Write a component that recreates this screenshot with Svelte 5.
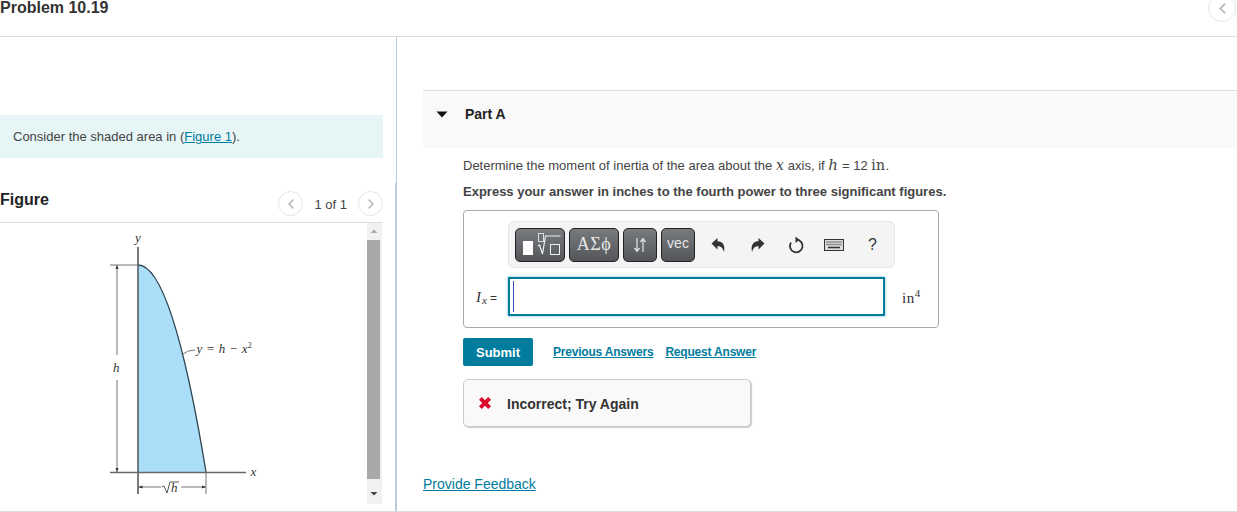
<script>
  const hPath = 'M138 265Q172 265 206 472L138 472Z';
</script>

<div class="page">
  <header class="top">
    <h1>Problem 10.19</h1>
    <button class="round top-back" aria-label="Back">
      <svg viewBox="0 0 10 14" width="9" height="13"><path d="M8 1.500 2.500 7 8 12.500" /></svg>
    </button>
  </header>

  <main class="main">
    <section class="left">
      <div class="intro">Consider the shaded area in (<a href="#f">Figure 1</a>).</div>
      <div class="fig-head">
        <h2>Figure</h2>
        <div class="pager">
          <button class="round" aria-label="Previous"><svg viewBox="0 0 10 14" width="8" height="12"><path d="M8 1.500 2.500 7 8 12.500" /></svg></button>
          <span>1 of 1</span>
          <button class="round" aria-label="Next"><svg viewBox="0 0 10 14" width="8" height="12"><path d="M2 1.500 7.500 7 2 12.500" /></svg></button>
        </div>
      </div>
      <div class="fig-body">
        <svg class="figure" viewBox="0 223 367 281" width="367" height="281">
          <path d={hPath} fill="#abdef9" />
          <path d="M138 265Q172 265 206 472" fill="none" stroke="#2f4650" stroke-width="1.300" />
          <g fill="none" stroke="#777" stroke-width="1">
            <path d="M110 265H138M117 265V355M117 380V472" />
            <path d="M206 472V494M138 487H161M181 487H206" />
            <path d="M183 354Q188 350 195 350" />
          </g>
          <path d="M138 247V494" stroke="#5d666b" stroke-width="1.700" />
          <path d="M110 472.500H246" stroke="#666" stroke-width="1.300" />
          <path d="M117 265l-1.500 4h3zM117 472l-1.500-4h3zM138.500 487l4-1.500v3zM206 487l-4-1.500v3z" fill="#333" />
          <path d="M162 487l2-1 3 7 3-11h9" fill="none" stroke="#444" stroke-width=".9" />
          <g class="lbl">
            <text x="135" y="241.500">y</text>
            <text x="113" y="371.500">h</text>
            <text class="eqn" x="196.500" y="352.500">y = h − x<tspan dy="-5" font-size="8" font-style="normal">2</tspan></text>
            <text x="250.500" y="475.500">x</text>
            <text x="171" y="492">h</text>
          </g>
        </svg>
        <div class="scroll">
          <svg viewBox="0 0 14 17" width="14" height="17"><path d="M3.500 10 7 6.500 10.500 10Z" fill="#aaa" /></svg>
          <div class="thumb"></div>
          <svg viewBox="0 0 14 25" width="14" height="25"><path d="M3.500 13 7 16.500 10.500 13Z" fill="#444" /></svg>
        </div>
      </div>
    </section>

    <section class="right">
      <div class="part">
        <svg class="caret" viewBox="0 0 12 7" width="12" height="7"><path d="M0.500 0.500H11.500L6 6.500Z" fill="#111" /></svg>
        <h3>Part A</h3>
      </div>
      <div class="work">
        <p class="q">Determine the moment of inertia of the area about the <i class="m">x</i> axis, if <i class="m big">h</i> = 12 <span class="m up">in</span>.</p>
        <p class="ex">Express your answer in inches to the fourth power to three significant figures.</p>

        <div class="answer">
          <div class="toolbar">
            <button class="tb w50" aria-label="Templates">
              <svg viewBox="0 0 48 32" width="48" height="32">
                <rect x="7" y="12" width="10" height="14" fill="#fff" />
                <path d="M22 17l1.500-1 3 9 3-18h15" fill="none" stroke="#eee" stroke-width="1.200" />
                <rect x="22.500" y="4.500" width="5" height="8" fill="none" stroke="#ddd" />
                <rect x="34.500" y="15.500" width="9" height="10" fill="none" stroke="#eee" />
              </svg>
            </button>
            <button class="tb w50 greek">ΑΣϕ</button>
            <button class="tb w35" aria-label="Subscript and superscript">
              <svg viewBox="0 0 16 18" width="16" height="18"><path d="M5 2V15M2.500 12 5 15.500 7.500 12M11 16V3M8.500 6 11 2.500 13.500 6" fill="none" stroke="#ddd" stroke-width="1.300" /></svg>
            </button>
            <button class="tb w35 vec">vec</button>
            <div class="acts">
              <svg class="a-undo" viewBox="0 0 15 16" width="15" height="16"><path d="M0.500 6.500 6.500 1V4.300C11.500 4.300 14.500 8 13 15 12 11 10 9 6.500 9V12.500Z" fill="#333" /></svg>
              <svg class="a-redo" viewBox="0 0 15 16" width="15" height="16"><path d="M14.500 6.500 8.500 1V4.300C3.500 4.300 0.500 8 2 15 3 11 5 9 8.500 9V12.500Z" fill="#333" /></svg>
              <svg class="a-reset" viewBox="0 0 18 18" width="18" height="18"><path d="M9.500 3.700A6.300 6.300 0 1 1 4 6.500" fill="none" stroke="#333" stroke-width="1.800" /><path d="M8.500 0.500V7L12.500 3.700Z" fill="#333" /></svg>
              <svg class="a-keys" viewBox="0 0 20 12" width="20" height="12"><rect x=".5" y=".5" width="19" height="11" fill="#ddd" stroke="#333" /><path d="M2.500 3H17.500M2.500 5.500H17.500" stroke="#444" stroke-width="1.300" stroke-dasharray="1 1" /><path d="M4 8.500H16" stroke="#333" stroke-width="1.500" /></svg>
              <span class="help">?</span>
            </div>
          </div>
          <div class="entry">
            <span class="lhs"><i class="li">I</i><i class="lx">x</i><span class="eq">=</span></span>
            <div class="input"><span class="cursor"></span></div>
            <span class="unit">in<sup>4</sup></span>
          </div>
        </div>

        <div class="actions">
          <button class="submit">Submit</button>
          <a href="#p">Previous Answers</a>
          <a href="#r">Request Answer</a>
        </div>

        <div class="feedback">
          <svg viewBox="0 0 14 14" width="14" height="14"><path d="M1 3.800 3.800 1 7 4.200 10.200 1 13 3.800 9.800 7 13 10.200 10.200 13 7 9.800 3.800 13 1 10.200 4.200 7Z" fill="#dc0a2c" /></svg>
          <span class="fb-text">Incorrect; Try Again</span>
        </div>
      </div>
      <a class="provide" href="#pf">Provide Feedback</a>
    </section>
  </main>
</div>

<style>
  :global(body) { margin: 0; background: #fff; }
  .page {
    width: 1237px; height: 512px; overflow: hidden; display: flex; flex-direction: column;
    font-family: "Liberation Sans", Arial, sans-serif; color: #333; box-sizing: border-box;
  }
  h1, h2, h3, p { margin: 0; }
  button { font-family: inherit; padding: 0; cursor: pointer; }
  a { color: #007c9e; }

  .top {
    height: 37px; box-sizing: border-box; border-bottom: 1px solid #ddd; flex: none;
    display: flex; justify-content: space-between; align-items: flex-start;
  }
  h1 { font-size: 16px; line-height: 16px; font-weight: 700; color: #333; }
  .round {
    width: 25px; height: 25px; border-radius: 50%; border: 1px solid #e5e5e5; background: #fff;
    display: flex; align-items: center; justify-content: center; box-sizing: border-box;
  }
  .round path { fill: none; stroke: #bbb; stroke-width: 2; }
  .top-back { width: 28px; height: 28px; margin-top: -6px; margin-right: 1px; }

  .main { flex: 1; display: flex; min-height: 0; border-bottom: 1px solid #ddd; }
  .left {
    width: 396px; flex: none; padding-top: 78px; box-sizing: border-box;
    background: linear-gradient(#b5cde0, #b5cde0) right bottom / 1px calc(100% - 146px) no-repeat;
  }
  .intro {
    width: 383px; height: 43px; box-sizing: border-box; background: #e6f5f6; padding: 14px 0 0 13px;
    font-size: 13px; line-height: 16px; color: #444;
  }
  .fig-head {
    width: 383px; height: 65px; box-sizing: border-box; border-bottom: 1px solid #ddd;
    display: flex; justify-content: space-between; align-items: flex-start; padding-top: 33px;
  }
  h2 { font-size: 16px; line-height: 18px; color: #222; }
  .pager { display: flex; align-items: center; gap: 11px; font-size: 13px; color: #444; }
  .pager span { padding-top: 1px; }
  .fig-body { width: 383px; height: 281px; display: flex; }
  .figure { display: block; flex: none; }
  .lbl text { font-family: "Liberation Serif", serif; font-style: italic; font-size: 13px; fill: #333; }
  .lbl .eqn { letter-spacing: .3px; }
  .scroll { width: 15px; background: #f1f1f1; display: flex; flex-direction: column; }
  .thumb { flex: 1; width: 13px; background: #a8a8a8; }

  .right { flex: 1; min-width: 0; border-left: 1px solid #b9cbdc; padding: 53px 0 0 26px; display: flex; flex-direction: column; }
  .part {
    height: 58px; box-sizing: border-box; border-top: 1px solid #ddd; background: #f9f9f9;
    display: flex; align-items: flex-start; padding: 15px 0 0 13px;
  }
  .caret { margin: 5px 11px 0 0; }
  h3 { font-size: 14px; line-height: 16px; font-weight: 700; color: #222; margin-left: 6px; }
  .work { padding-left: 40px; }
  .q { margin-top: 9px; font-size: 13px; line-height: 16px; color: #444; }
  .m { font-family: "DejaVu Serif", serif; font-size: 14px; letter-spacing: .4px; }
  .big { font-size: 15px; }
  .up { font-style: normal; }
  .ex { margin-top: 10px; font-size: 13px; line-height: 16px; font-weight: 700; color: #444; }

  .answer {
    margin-top: 10px; width: 476px; height: 118px; box-sizing: border-box; border: 1px solid #aaa; border-radius: 4px;
    padding-top: 10px;
  }
  .toolbar {
    margin-left: 44px; width: 387px; height: 47px; box-sizing: border-box; background: #f4f4f4;
    border: 1px solid #e6e6e6; border-radius: 6px; display: flex; align-items: center; padding-left: 6px; gap: 4px;
  }
  .tb {
    height: 34px; box-sizing: border-box; border: 1px solid #222; border-radius: 5px;
    background: linear-gradient(#777b7e, #54565a); color: #e6e6e6;
    display: flex; align-items: center; justify-content: center; overflow: hidden;
  }
  .w50 { width: 50px; }
  .w35 { width: 34px; }
  .greek { font-family: "Liberation Serif", serif; font-size: 18px; letter-spacing: .5px; }
  .vec { font-size: 14px; padding-bottom: 3px; }
  .acts { display: flex; align-items: center; margin-left: 12px; }
  .a-redo { margin-left: 24px; }
  .a-reset { margin-left: 22px; }
  .a-keys { margin-left: 19px; }
  .help { font-size: 16px; color: #333; margin-left: 24px; }

  .entry { display: flex; align-items: center; margin-top: 9px; }
  .lhs { width: 44px; box-sizing: border-box; padding-left: 12px; font-family: "Liberation Serif", serif; color: #333; white-space: nowrap; }
  .li { font-size: 15px; }
  .lx { font-size: 11px; position: relative; top: 2px; margin-left: 1px; }
  .eq { font-family: "Liberation Sans", sans-serif; font-size: 12px; margin-left: 3px; }
  .input {
    width: 377px; height: 39px; box-sizing: border-box; border: 2px solid #007c9e; box-shadow: 0 0 3px #7cc0d4;
    background: #fff; padding: 2px 0 0 3px;
  }
  .cursor { display: block; width: 1px; height: 31px; background: #2d4fb0; }
  .unit { margin-left: 17px; font-family: "Liberation Serif", serif; font-size: 15px; color: #333; letter-spacing: .5px; }
  .unit sup { font-size: 11px; }

  .actions { margin-top: 10px; display: flex; align-items: center; font-size: 12px; font-weight: 700; letter-spacing: -.2px; }
  .submit {
    width: 70px; height: 28px; border: 0; border-radius: 2px; background: #007c9e; color: #fff;
    font-size: 13px; font-weight: 700; margin-right: 20px;
  }
  .actions a + a { margin-left: 12px; }

  .feedback {
    margin-top: 13px; width: 288px; height: 48px; box-sizing: border-box; background: #f9f9f9;
    border: 1px solid #ccc; border-radius: 5px; box-shadow: 1px 1px 1px #ccc;
    display: flex; align-items: center; padding-left: 14px; gap: 15px;
    font-size: 14px; font-weight: 700; color: #333;
  }
  .fb-text { padding-top: 2px; }
  .provide { margin-top: 49px; font-size: 14px; width: max-content; }
</style>
